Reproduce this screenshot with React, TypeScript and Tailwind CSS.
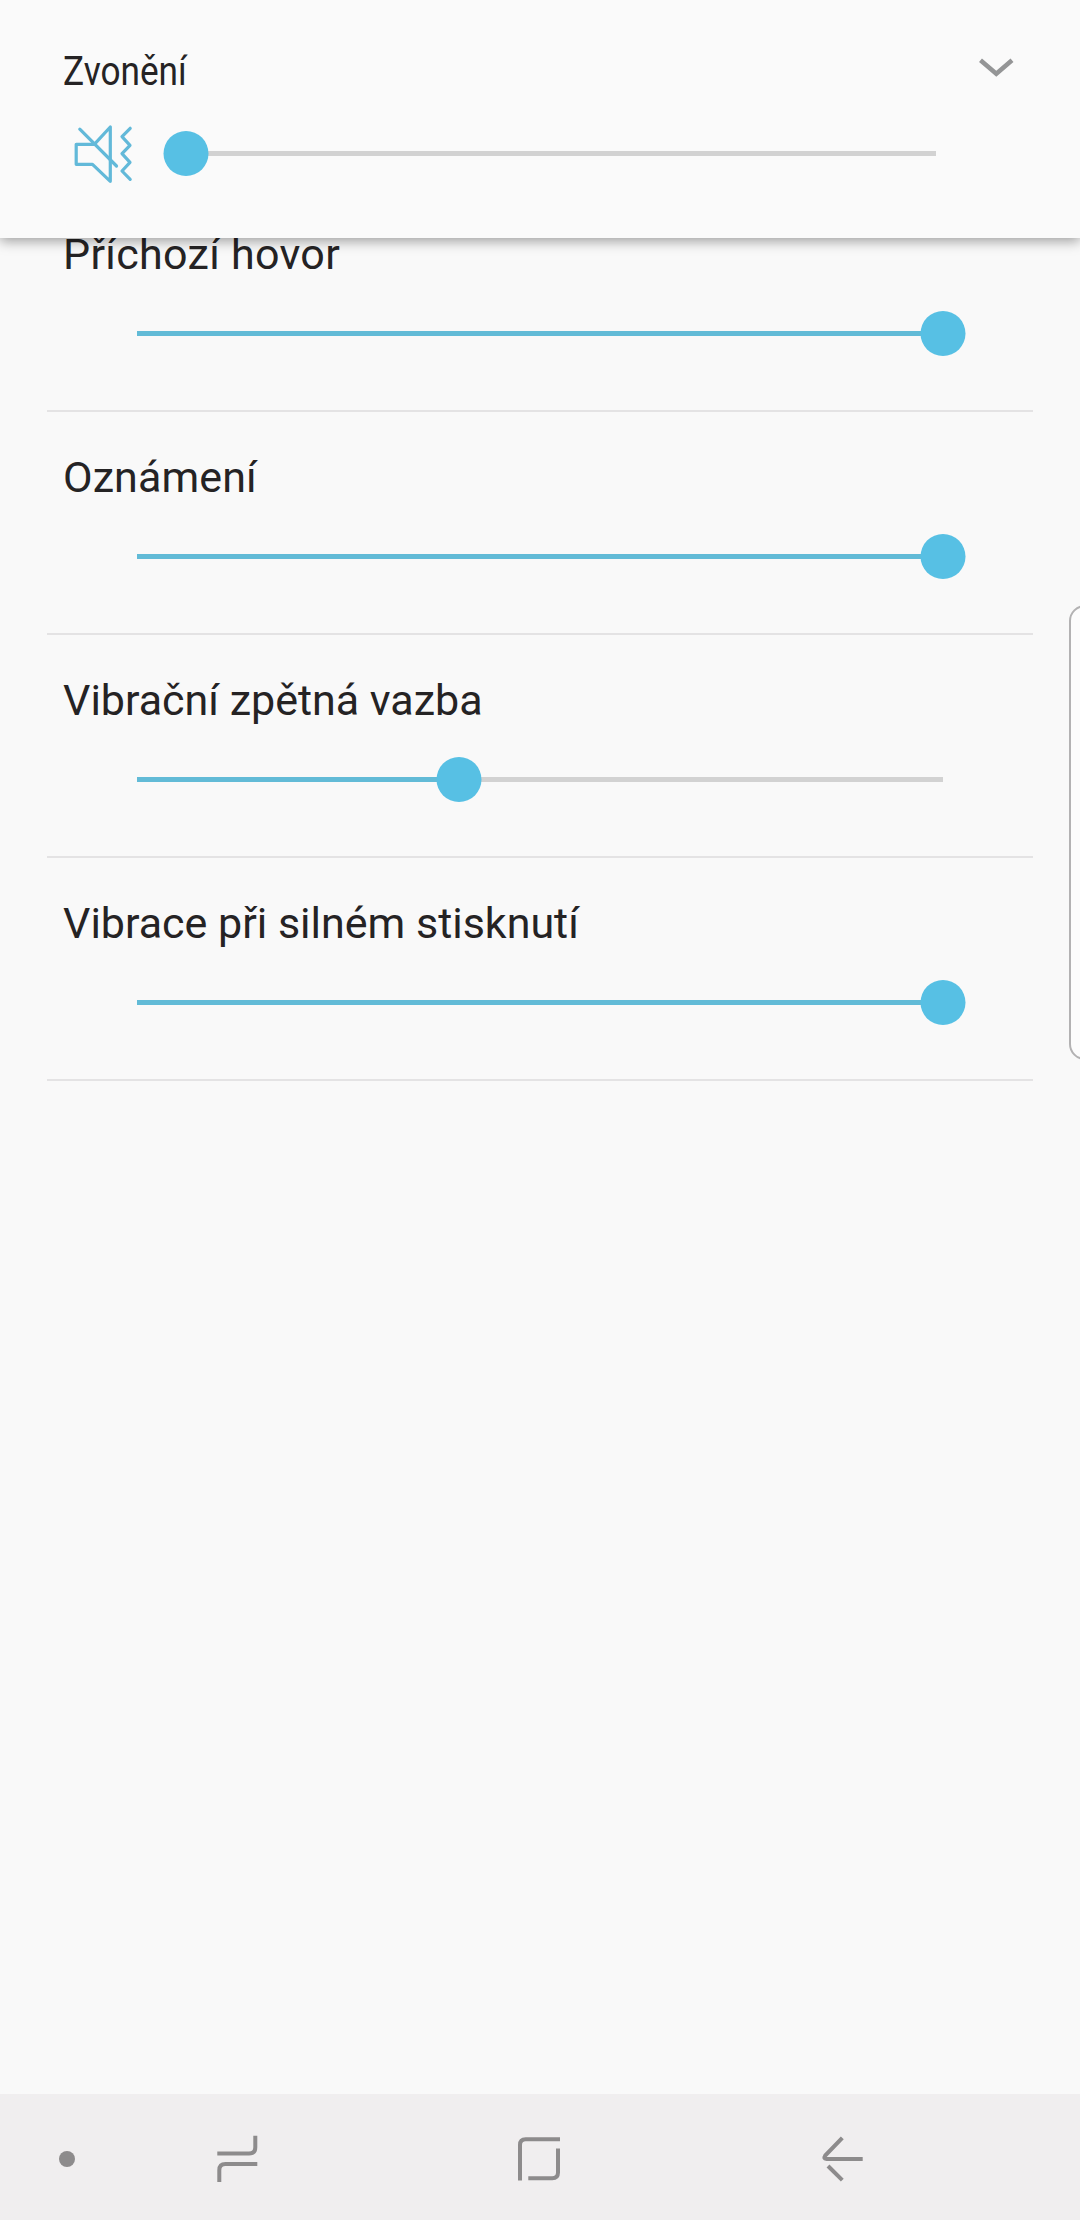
import { clsx } from "clsx";

const VOLUMES = [
  { label: "Příchozí hovor", value: 100, labelClass: "tracking-[0.3px]" },
  { label: "Oznámení", value: 100, labelClass: "tracking-[0.1px]" },
  { label: "Vibrační zpětná vazba", value: 40 },
  { label: "Vibrace při silném stisknutí", value: 100 },
];

interface SliderProps {
  label: string;
  value: number;
  className?: string;
}

interface VolumeRowProps {
  label: string;
  value: number;
  labelClass?: string;
}

function Slider({ label, value, className }: SliderProps) {
  return (
    <div
      role="slider"
      aria-label={label}
      aria-valuenow={value}
      className={clsx("relative flex h-[45px] items-center", className)}
    >
      <div className="h-[5px] w-full bg-[#d2d2d2]">
        <div className="h-full bg-[#62bbd7]" style={{ width: `${value}%` }} />
      </div>
      <span
        className="absolute top-0 size-[45px] -translate-x-1/2 rounded-full bg-[#57c0e4]"
        style={{ left: `${value}%` }}
      />
    </div>
  );
}

function MutedVibrateIcon() {
  return (
    <svg
      width="60"
      height="62"
      viewBox="0 0 60 62"
      fill="none"
      stroke="#62b9d9"
      strokeWidth="3.2"
      strokeLinecap="round"
      strokeLinejoin="round"
    >
      <path d="M3.2 21.3H21.3L37.3 4V58.3L19.5 41.3H3.2Z" />
      <path d="M6.8 6.2 43.5 43" />
      <path d="M57.2 5.3 49 13.7 57 22.3 49 30.7 57 39.3 49 48 57.2 56.3" />
    </svg>
  );
}

function ChevronIcon() {
  return (
    <svg width="36" height="22" viewBox="0 0 36 22" fill="none" stroke="#949596" strokeWidth="4.5">
      <path d="M2.5 3.2 18.3 16.8 34 3.2" />
    </svg>
  );
}

function Header() {
  return (
    <header className="relative z-10 box-content h-[208px] shrink-0 bg-[#fafafa] pt-[30px] shadow-[0_3px_12px_rgba(0,0,0,0.38)]">
      <div className="flex h-[70px] items-start justify-between pl-[63px] pr-[66px]">
        <h1 className="mt-[18px] origin-left scale-x-[0.88] text-[40px] leading-[48px]">Zvonění</h1>
        <button className="mt-[27px]" aria-label="Rozbalit">
          <ChevronIcon />
        </button>
      </div>
      <div className="mt-[23px] flex h-[62px] items-center pl-[73px]">
        <MutedVibrateIcon />
        <Slider label="Zvonění" value={0} className="mb-px ml-[53px] w-[750px]" />
      </div>
    </header>
  );
}

function VolumeRow({ label, value, labelClass }: VolumeRowProps) {
  return (
    <section className="h-[223px] border-b-2 border-[#e4e3e4] pt-[40px]">
      <h2 className={clsx("ml-4 text-[43px] leading-[50px]", labelClass)}>{label}</h2>
      <Slider label={label} value={value} className="ml-[90px] mt-[32px] w-[806px]" />
    </section>
  );
}

function NavBar() {
  return (
    <nav className="flex h-[126px] shrink-0 items-center bg-[#f0eeef] pl-[59px] pt-[2px] text-[#8d8b8c]">
      <span className="mt-[2px] size-4 rounded-full bg-current" />
      <svg
        className="ml-[141px]"
        width="42"
        height="48"
        viewBox="0 0 42 48"
        fill="none"
        stroke="currentColor"
        strokeWidth="4"
      >
        <path d="M1.3 19.5H33Q39.3 19.5 39.3 13.2V1.7" />
        <path d="M41.3 30H9.5Q3.3 30 3.3 36.2V48" />
      </svg>
      <svg
        className="ml-[259px]"
        width="44"
        height="48"
        viewBox="0 0 44 48"
        fill="none"
        stroke="currentColor"
        strokeWidth="4"
      >
        <path d="M3 46.4V11Q3 5.3 8.7 5.3H43" />
        <path d="M41 14.4V38.5Q41 44.3 35.2 44.3H11.3" />
      </svg>
      <svg
        className="ml-[260px]"
        width="44"
        height="48"
        viewBox="0 0 44 48"
        fill="none"
        stroke="currentColor"
        strokeWidth="4"
      >
        <path d="M21.3 3.8 4.2 21.6Q2 25 5.5 25H41.7" />
        <path d="M7 32 21.3 46.2" />
      </svg>
    </nav>
  );
}

export default function App() {
  return (
    <div className="relative flex h-[2220px] w-[1080px] flex-col overflow-hidden bg-[#f9f9f9] font-['Roboto',sans-serif] text-[#252324]">
      <Header />
      <main className="-mt-[49px] flex-1 px-[47px]">
        {VOLUMES.map((item) => (
          <VolumeRow key={item.label} {...item} />
        ))}
      </main>
      <NavBar />
      {/* edge panel handle */}
      <div className="absolute -right-4 top-[605px] h-[455px] w-[27px] rounded-l-[16px] border-2 border-[#b3b2b3] bg-[#fcfcfc]" />
    </div>
  );
}
